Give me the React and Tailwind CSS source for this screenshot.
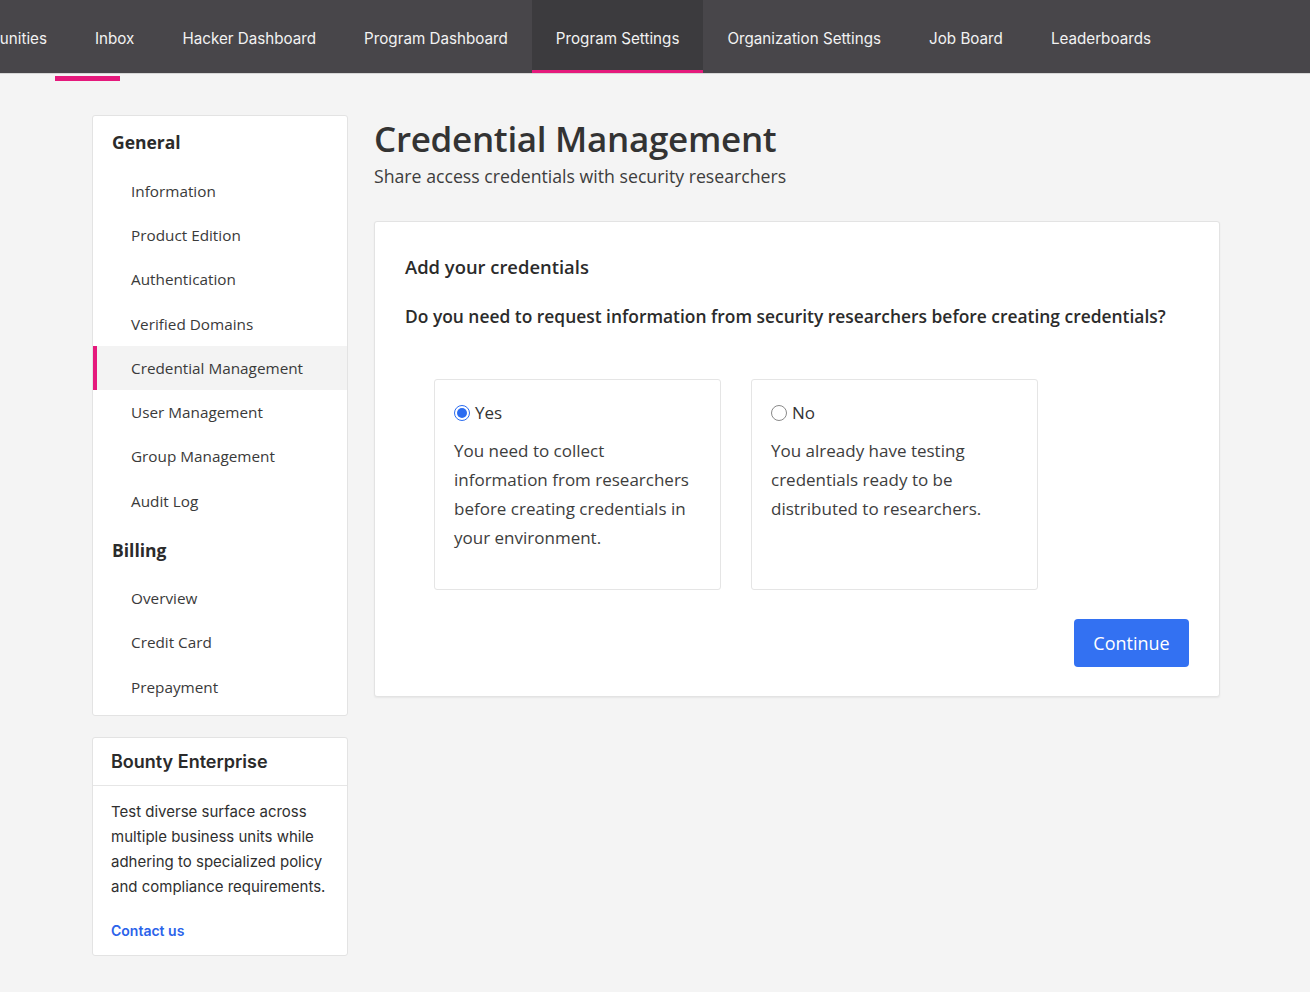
import { useState } from 'react';

const navItems = ['Inbox', 'Hacker Dashboard', 'Program Dashboard', 'Program Settings', 'Organization Settings', 'Job Board', 'Leaderboards'];

const generalLinks = ['Information', 'Product Edition', 'Authentication', 'Verified Domains', 'Credential Management', 'User Management', 'Group Management', 'Audit Log'];
const billingLinks = ['Overview', 'Credit Card', 'Prepayment'];

const options = [
  { id: 'yes', label: 'Yes', text: 'You need to collect information from researchers before creating credentials in your environment.' },
  { id: 'no', label: 'No', text: 'You already have testing credentials ready to be distributed to researchers.' },
];

function TopNav() {
  return (
    <div className="bg-[#48464a] h-[74px] flex items-stretch border-b border-[#d6d6d6] font-['Inter',sans-serif] text-[15.2px] text-[#f2f2f2]">
      <div className="w-[71px] flex justify-end items-center pr-6 pt-[6px] overflow-hidden whitespace-nowrap shrink-0">
        Opportunities
      </div>
      {navItems.map((item) => (
        <div
          key={item}
          className={
            item === 'Program Settings'
              ? 'px-6 flex items-center whitespace-nowrap bg-[#3c3b3e] border-b-[3px] border-[#e5197c] pt-[9px]'
              : 'px-6 flex items-center whitespace-nowrap pt-[6px]'
          }
        >
          {item}
        </div>
      ))}
    </div>
  );
}

function SideLink({ label, active }) {
  return (
    <div
      className={
        active
          ? 'h-[44.3px] flex items-center pl-[34px] border-l-4 border-[#e5197c] bg-[#f3f3f3] text-[#3a3a3a]'
          : 'h-[44.3px] flex items-center pl-[38px] text-[#3a3a3a]'
      }
    >
      {label}
    </div>
  );
}

function Sidebar() {
  return (
    <div className="w-[256px] shrink-0 flex flex-col gap-[21px]">
      <div className="bg-white border border-[#e3e3e3] rounded-[3px] pb-[6px] text-[15.3px] font-['Open_Sans',sans-serif]">
        <div className="h-[53px] flex items-center pl-[19px] text-[17.5px] font-bold text-[#2b2b2b]">General</div>
        {generalLinks.map((l) => (
          <SideLink key={l} label={l} active={l === 'Credential Management'} />
        ))}
        <div className="h-[53px] flex items-center pl-[19px] text-[17.5px] font-bold text-[#2b2b2b]">Billing</div>
        {billingLinks.map((l) => (
          <SideLink key={l} label={l} />
        ))}
      </div>

      <div className="bg-white border border-[#e3e3e3] rounded-[3px] font-['Inter',sans-serif]">
        <div className="h-[48px] flex items-center px-[18px] border-b border-[#e6e6e6] text-[18px] font-semibold text-[#2b2b2b]">
          Bounty Enterprise
        </div>
        <div className="px-[18px] pt-[13px] pb-[14px]">
          <p className="text-[15px] leading-[25px] text-[#2f2f2f]">
            Test diverse surface across multiple business units while adhering to specialized policy and compliance requirements.
          </p>
          <a href="#" className="block mt-[21px] text-[14px] font-semibold text-[#2b63ea]">Contact us</a>
        </div>
      </div>
    </div>
  );
}

function Radio({ checked }) {
  return checked ? (
    <span className="w-[16px] h-[16px] rounded-full border border-[#2b6cf0] flex items-center justify-center shrink-0">
      <span className="w-[10px] h-[10px] rounded-full bg-[#2b6cf0]" />
    </span>
  ) : (
    <span className="w-[16px] h-[16px] rounded-full border border-[#8a8a8a] bg-white shrink-0" />
  );
}

export default function App() {
  const [choice, setChoice] = useState('yes');

  return (
    <div className="min-h-[992px] bg-[#f4f4f4]">
      <TopNav />
      <div className="ml-[55px] w-[65px] h-[5px] mt-[2px] bg-[#e5197c]" />

      <div className="w-[1128px] ml-[92px] flex gap-[26px] pt-[34px] font-['Open_Sans',sans-serif]">
        <Sidebar />

        <div className="flex-1">
          <h1 className="mt-[2px] text-[35px] leading-[44px] font-semibold text-[#333] tracking-[-0.3px]">Credential Management</h1>
          <p className="text-[17.7px] leading-[24px] text-[#3d3d3d] mt-[3px]">Share access credentials with security researchers</p>

          <div className="mt-[33px] bg-white border border-[#e3e3e3] rounded-[3px] shadow-[0_1px_2px_rgba(0,0,0,0.06)] px-[30px] pt-[32px] pb-[29px]">
            <h2 className="text-[18.4px] leading-[26px] font-semibold text-[#2b2b2b]">Add your credentials</h2>
            <p className="mt-[24px] text-[17.4px] leading-[24px] font-semibold text-[#2b2b2b]">
              Do you need to request information from security researchers before creating credentials?
            </p>

            <div className="flex gap-[30px] ml-[29px] mt-[51px]">
              {options.map((o) => (
                <label
                  key={o.id}
                  onClick={() => setChoice(o.id)}
                  className="w-[287px] h-[211px] border border-[#e5e5e5] rounded-[3px] px-[19px] pt-[22px] cursor-pointer"
                >
                  <div className="flex items-center gap-[5px] text-[17px] leading-[22px] text-[#333]">
                    <Radio checked={choice === o.id} />
                    {o.label}
                  </div>
                  <p className="mt-[12px] w-[240px] text-[17px] leading-[29px] text-[#3d3d3d]">{o.text}</p>
                </label>
              ))}
            </div>

            <div className="flex justify-end mt-[29px]">
              <button className="w-[115px] h-[48px] rounded-[4px] bg-[#3371f2] text-white text-[18px]">Continue</button>
            </div>
          </div>
        </div>
      </div>
    </div>
  );
}
